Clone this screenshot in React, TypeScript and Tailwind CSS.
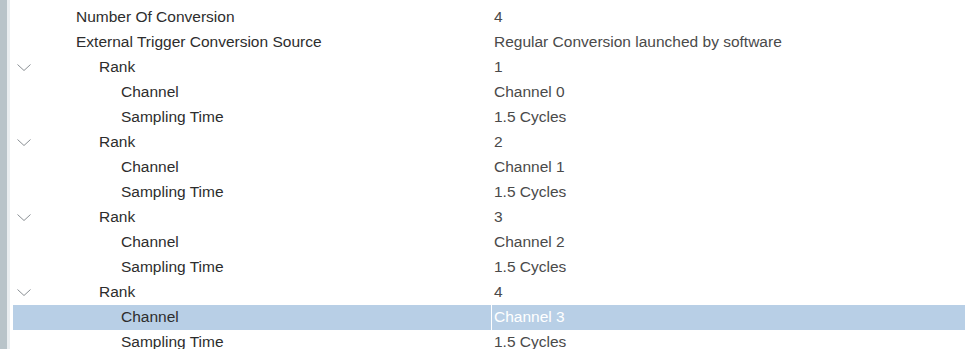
const rows: { label: string; value: string; level: number; expander?: boolean; selected?: boolean }[] = [
  { label: "Number Of Conversion", value: "4", level: 0 },
  { label: "External Trigger Conversion Source", value: "Regular Conversion launched by software", level: 0 },
  { label: "Rank", value: "1", level: 1, expander: true },
  { label: "Channel", value: "Channel 0", level: 2 },
  { label: "Sampling Time", value: "1.5 Cycles", level: 2 },
  { label: "Rank", value: "2", level: 1, expander: true },
  { label: "Channel", value: "Channel 1", level: 2 },
  { label: "Sampling Time", value: "1.5 Cycles", level: 2 },
  { label: "Rank", value: "3", level: 1, expander: true },
  { label: "Channel", value: "Channel 2", level: 2 },
  { label: "Sampling Time", value: "1.5 Cycles", level: 2 },
  { label: "Rank", value: "4", level: 1, expander: true },
  { label: "Channel", value: "Channel 3", level: 2, selected: true },
  { label: "Sampling Time", value: "1.5 Cycles", level: 2 },
];

const indent = ["pl-[63px]", "pl-[86px]", "pl-[108px]"];

function Chevron() {
  return (
    <svg width="14" height="8" viewBox="0 0 14 8" className="block">
      <path d="M0.5 0.5 L7 6.5 L13.5 0.5" fill="none" stroke="#8a8f94" strokeWidth="1" />
    </svg>
  );
}

export default function App() {
  return (
    <div className="flex h-[349px] w-[965px] overflow-hidden bg-white font-['Liberation_Sans',Arial,sans-serif] text-[15.5px]">
      <div className="w-[7px] shrink-0 bg-[#b9c4c9]" />
      <div className="w-[3px] shrink-0 bg-[#eaeef0]" />
      <div className="flex-1 pl-[3px] pt-[5px]">
        {rows.map((r, i) => (
          <div key={i} className={`flex h-[25px] items-center leading-[18px] ${r.selected ? "bg-[#b8cfe6]" : ""}`}>
            <div className={`relative flex h-full w-[478px] shrink-0 items-center pb-[2px] ${indent[r.level]} text-[#2d2d2d]`}>
              {r.expander && (
                <span className="absolute left-[4px] top-[9px]">
                  <Chevron />
                </span>
              )}
              {r.label}
            </div>
            <div className={`h-full w-px shrink-0 ${r.selected ? "bg-white" : ""}`} />
            <div className={`pb-[2px] pl-[2px] ${r.selected ? "text-white" : "text-[#4a4a4a]"}`}>{r.value}</div>
          </div>
        ))}
      </div>
    </div>
  );
}
